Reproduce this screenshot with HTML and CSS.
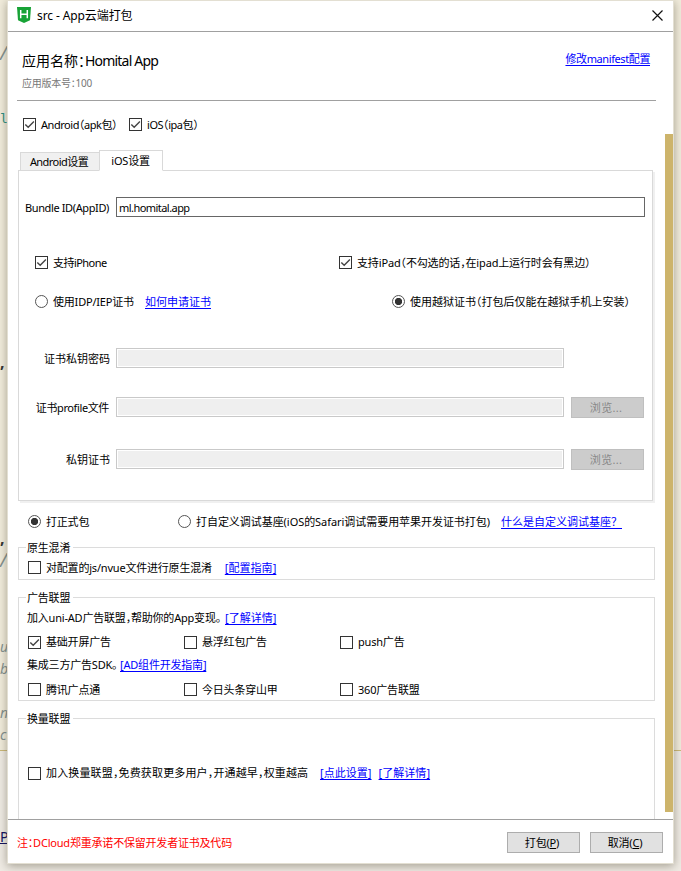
FILE: index.html
```html
<!DOCTYPE html>
<html lang="zh-CN">
<head>
<meta charset="utf-8">
<title>src - App云端打包</title>
<link rel="stylesheet" href="styles.css">
</head>
<body>
<svg width="0" height="0" class="defs">
  <symbol id="tick" viewBox="0 0 13 13"><path d="M2.3 6.4 5.2 9.3 10.9 3.5" fill="none" stroke="#444" stroke-width="1.4"/></symbol>
</svg>
<div class="editor">
  <i class="code c1">/</i><b class="code c2">l</b><b class="code c3">,</b><b class="code c4">,</b><i class="code c5">/</i>
  <i class="code c6">u</i><i class="code c7">b</i><i class="code c8">n</i><i class="code c9">c</i><span class="code c10">P</span>
</div>
<main class="dialog">
  <header class="titlebar">
    <svg class="logo" viewBox="0 0 14 16"><path d="M0 0H14L13 13.2 7 16 1 13.2Z" fill="#18a336"/><path d="M3.7 3V11.2M10.3 3V11.2M3.7 7.2H10.3" stroke="#fff" stroke-width="1.5" fill="none"/></svg>
    <span class="title">src - App云端打包</span>
    <svg class="close" viewBox="0 0 11 11"><path d="M.5.5 10.5 10.5M10.5.5.5 10.5" stroke="#111" stroke-width="1.2"/></svg>
  </header>
  <div class="body">
    <div class="content">
      <section class="app">
        <div>
          <h1>应用名称：<span class="name">Homital App</span></h1>
          <p>应用版本号：100</p>
        </div>
        <a class="t manifest">修改manifest配置</a>
      </section>
      <div class="row platforms">
        <label class="opt android"><span class="box"><svg><use href="#tick"/></svg></span><span class="t">Android（apk包）</span></label>
        <label class="opt"><span class="box"><svg><use href="#tick"/></svg></span><span class="t">iOS（ipa包）</span></label>
      </div>
      <nav class="tabs"><div class="tab"><span class="t tight">Android设置</span></div><div class="tab active"><span class="t">iOS设置</span></div></nav>
      <section class="panel">
        <div class="field bundle"><span class="label t">Bundle ID(AppID)</span><div class="input t">ml.homital.app</div></div>
        <div class="row devices">
          <label class="opt iphone"><span class="box"><svg><use href="#tick"/></svg></span><span class="t tight">支持iPhone</span></label>
          <label class="opt"><span class="box"><svg><use href="#tick"/></svg></span><span class="t ipad">支持iPad（不勾选的话，在ipad上运行时会有黑边）</span></label>
        </div>
        <div class="row certs">
          <label class="opt idp"><span class="radio"></span><span class="t">使用IDP/IEP证书</span></label>
          <a class="t apply">如何申请证书</a>
          <label class="opt"><span class="radio on"></span><span class="t jail">使用越狱证书（打包后仅能在越狱手机上安装）</span></label>
        </div>
        <div class="field secret"><span class="label t">证书私钥密码</span><div class="input off"></div></div>
        <div class="field profile"><span class="label t">证书profile文件</span><div class="input off"></div><div class="btn disabled t">浏览...</div></div>
        <div class="field"><span class="label t">私钥证书</span><div class="input off"></div><div class="btn disabled t">浏览...</div></div>
      </section>
      <div class="row build">
        <label class="opt formal"><span class="radio on"></span><span class="t">打正式包</span></label>
        <label class="opt custom"><span class="radio"></span><span class="t base">打自定义调试基座(iOS的Safari调试需要用苹果开发证书打包)</span></label>
        <a class="t what">什么是自定义调试基座？</a>
      </div>
      <section class="group obfuscate">
        <h2 class="t">原生混淆</h2>
        <div class="row"><label class="opt"><span class="box"></span><span class="t nvue">对配置的js/nvue文件进行原生混淆</span></label><a class="t guide">[配置指南]</a></div>
      </section>
      <section class="group ads">
        <h2 class="t">广告联盟</h2>
        <div class="row note"><span class="t uni">加入uni-AD广告联盟，帮助你的App变现。</span><a class="t wide">[了解详情]</a></div>
        <div class="row choices first">
          <label class="opt"><span class="box"><svg><use href="#tick"/></svg></span><span class="t">基础开屏广告</span></label>
          <label class="opt"><span class="box"></span><span class="t">悬浮红包广告</span></label>
          <label class="opt"><span class="box"></span><span class="t">push广告</span></label>
        </div>
        <div class="row note second"><span class="t sdk">集成三方广告SDK。</span><a class="t">[AD组件开发指南]</a></div>
        <div class="row choices last">
          <label class="opt"><span class="box"></span><span class="t">腾讯广点通</span></label>
          <label class="opt"><span class="box"></span><span class="t">今日头条穿山甲</span></label>
          <label class="opt"><span class="box"></span><span class="t">360广告联盟</span></label>
        </div>
      </section>
      <section class="group exchange">
        <h2 class="t">换量联盟</h2>
        <div class="row"><label class="opt"><span class="box"></span><span class="t join">加入换量联盟，免费获取更多用户，开通越早，权重越高</span></label><a class="t wide here">[点此设置]</a><a class="t wide more">[了解详情]</a></div>
      </section>
    </div>
    <div class="scroll"></div>
  </div>
  <footer class="footer">
    <span class="t warn">注：DCloud郑重承诺不保留开发者证书及代码</span>
    <div class="btn t">打包(<u>P</u>)</div>
    <div class="btn t">取消(<u>C</u>)</div>
  </footer>
</main>
</body>
</html>
```
FILE: styles.css
```css
* { box-sizing: border-box; }
body {
  margin: 0; width: 681px; height: 871px; overflow: hidden; position: relative;
  background: linear-gradient(#f1ecdc 0 750px, #cbb878 750px 751px, #efebe4 751px);
  font-family: "Noto Sans", "Noto Sans CJK SC", sans-serif;
  font-size: 11px; line-height: 16px; color: #000;
  font-feature-settings: "halt";
}
.defs { position: absolute; }
.code { position: absolute; left: 0; font: 14px/22px "Noto Sans", sans-serif; color: #84918f; }
i.code { font-style: italic; }
.c1 { top: 42px; font-size: 19px; }
.code.c2 { top: 108px; font: 13px/22px "DejaVu Sans Mono", monospace; color: #278f82; }
.code.c3, .code.c4 { top: 351px; color: #333; font-weight: 700; font-size: 16px; }
.code.c4 { top: 527px; }
.c5 { top: 549px; font-size: 19px; }
.c6 { top: 636px; }
.c7 { top: 658px; }
.c8 { top: 702px; }
.c9 { top: 724px; }
.code.c10 { top: 827px; font: 14px/20px "Noto Sans", sans-serif; color: #101060; text-decoration: underline; }

.dialog {
  position: relative; display: flex; flex-direction: column;
  margin: 1px 0 0 8px; width: 665px; height: 862px; background: #fff;
  box-shadow: 0 0 0 1px #e3dfd2, 0 2px 9px 1px rgba(70, 65, 45, .45);
}
.titlebar { display: flex; align-items: center; height: 31px; flex: none; border-bottom: 1px solid #a0a0a0; padding: 0 10px 2px 9px; }
.logo { width: 14px; height: 16px; }
.title { margin: 2px 0 0 6px; font-size: 12px; letter-spacing: -.1px; flex: 1; }
.close { width: 11px; height: 11px; }

.body { display: flex; height: 787px; flex: none; overflow: hidden; }
.content { width: 657px; padding: 0 9px; }
.scroll { width: 8px; height: 678px; margin-top: 102px; background: #cdb46b; }
.t { white-space: nowrap; letter-spacing: -.2px; }
.tight { letter-spacing: -.55px; }
.wide { letter-spacing: .05px; }
a { color: #00f; text-decoration: underline; text-underline-offset: 2px; }
.row { display: flex; align-items: center; }
.opt { display: flex; align-items: center; gap: 5px; }
.box { width: 13px; height: 13px; border: 1px solid #333; flex: none; }
.box svg { display: block; width: 13px; height: 13px; margin: -1px; }
.radio { width: 13px; height: 13px; border: 1px solid #555; border-radius: 50%; flex: none; }
.radio.on { background: radial-gradient(#333 0 3.3px, transparent 4px); }

.app { display: flex; justify-content: space-between; height: 69px; border-bottom: 1px solid #a0a0a0; padding: 19px 6px 0 5px; }
h1 { margin: 0; font-size: 14px; font-weight: 400; line-height: 20px; letter-spacing: 0; white-space: nowrap; }
.name { letter-spacing: -.8px; }
.app p { margin: 4px 0 0; font-size: 10px; line-height: 16px; color: #777; letter-spacing: -.25px; }
.manifest { height: 16px; letter-spacing: -.4px; }
.platforms { height: 47px; padding-left: 6px; margin-bottom: 2px; }
.platforms .t { letter-spacing: -.45px; }
.android { width: 106px; }

.tabs { display: flex; align-items: flex-end; height: 21px; padding-left: 3px; margin-bottom: -1px; position: relative; }
.tab { display: flex; align-items: center; justify-content: center; width: 79px; height: 19px; background: #f0f0f0; border: 1px solid #d9d9d9; border-right: 0; padding-right: 2px; }
.tab.active { width: 64px; height: 21px; background: #fff; border-right: 1px solid #d9d9d9; border-bottom-color: #fff; padding-right: 1px; }
.panel { width: 635px; height: 331px; margin-left: 1px; border: 1px solid #d9d9d9; box-shadow: 2px 2px 0 #f0f0f0; padding-top: 26px; }
.field { display: flex; align-items: flex-start; height: 20px; }
.label { width: 91px; margin-right: 6px; line-height: 21px; text-align: right; }
.secret .label, .profile + .field .label { letter-spacing: 0; }
.profile .label, .bundle .label { letter-spacing: -.38px; padding-right: 1px; }
.input { width: 448px; height: 20px; border: 1px solid #c9c9c9; flex: none; }
.input.off { background: #efefef; box-shadow: inset 0 0 0 1px #fff; }
.bundle .input { width: 529px; border-color: #666; padding-left: 2px; line-height: 19px; letter-spacing: -.55px; }
.btn { width: 73px; height: 21px; border: 1px solid #adadad; background: #e1e1e1; text-align: center; line-height: 19px; flex: none; padding-right: 3px; }
.btn.disabled { margin-left: 7px; color: #888; background: #ccc; border-color: #bfbfbf; letter-spacing: .3px; }
.devices { height: 39px; margin-top: 26px; padding-left: 16px; }
.iphone { width: 304px; }
.ipad { letter-spacing: -.15px; }
.jail { letter-spacing: 0; }
.certs { height: 39px; padding-left: 16px; }
.idp { width: 110px; }
.apply { width: 247px; letter-spacing: 0; }
.secret { margin-top: 27px; }
.profile { margin: 29px 0 32px; }

.build { height: 41px; padding-left: 11px; }
.formal { width: 150px; }
.custom { width: 323px; }
.base { letter-spacing: -.05px; }
.what { letter-spacing: 0; font-feature-settings: normal; }
.group { position: relative; width: 637px; margin-left: 1px; border: 1px solid #dcdcdc; }
.group h2 { position: absolute; top: -8px; left: 7px; margin: 0; padding: 0 3px 0 1px; background: #fff; font-size: 11px; line-height: 16px; font-weight: 400; }
.obfuscate { height: 33px; margin-top: 5px; }
.obfuscate .row { height: 39px; padding-left: 9px; }
.guide { margin-left: 13px; letter-spacing: .05px; }
.ads { height: 104px; margin-top: 17px; padding-top: 10px; }
.note { height: 20px; padding-left: 8px; }
.second { height: 18px; margin-bottom: 2px; }
.uni { width: 198px; }
.sdk { width: 93px; }
.choices { height: 29px; padding-left: 9px; }
.choices.last { height: 27px; }
.choices.first { height: 28px; }
.choices .opt { width: 156px; }
.exchange { height: 120px; margin-top: 17px; }
.exchange .row { height: 108px; padding-left: 9px; }
.join { width: 262px; letter-spacing: .15px; }
.here { margin-left: 12px; }
.more { margin-left: 7px; }

.footer { display: flex; align-items: flex-start; height: 44px; border-top: 1px solid #a0a0a0; padding: 12px 10px 0 9px; gap: 10px; }
.warn { flex: 1; color: #f00; line-height: 22px; }
```
